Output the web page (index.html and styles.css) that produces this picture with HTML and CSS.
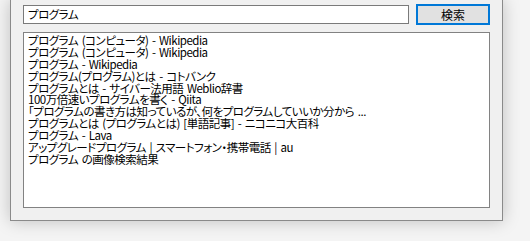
FILE: index.html
```html
<!DOCTYPE html>
<html lang="ja">
<head>
  <meta charset="UTF-8">
  <title>検索</title>
  <link rel="stylesheet" href="styles.css">
</head>
<body>
  <div class="window">
    <div class="search-row">
      <div class="query">プログラム</div>
      <button class="search-btn">検索</button>
    </div>
    <div class="results">
      <div class="item">プログラム (コンピュータ) - Wikipedia</div>
      <div class="item">プログラム (コンピュータ) - Wikipedia</div>
      <div class="item">プログラム - Wikipedia</div>
      <div class="item">プログラム(プログラム)とは - コトバンク</div>
      <div class="item">プログラムとは - サイバー法用語 Weblio辞書</div>
      <div class="item">100万倍速いプログラムを書く - Qiita</div>
      <div class="item">「プログラムの書き方は知っているが、何をプログラムしていいか分から ...</div>
      <div class="item">プログラムとは (プログラムとは) [単語記事] - ニコニコ大百科</div>
      <div class="item">プログラム - Lava</div>
      <div class="item">アップグレードプログラム | スマートフォン・携帯電話 | au</div>
      <div class="item">プログラム の画像検索結果</div>
    </div>
  </div>
</body>
</html>
```

FILE: styles.css
```css
* { margin:0; padding:0; box-sizing:border-box; }
body { height:241px; overflow:hidden; background:#f4f4f4; color:#000; font-family:"Noto Sans CJK JP", sans-serif; font-size:11.5px; }

/* ウィンドウ */
.window { margin-left:10px; width:493px; height:221px; display:flex; flex-direction:column; gap:7px; padding:4px 12px 12px; background:#f0f0f0; border:1px solid #8a8a8a; border-top:none; box-shadow:0 0 16px rgba(0,0,0,0.22); }

/* 検索欄 */
.search-row { display:flex; align-items:center; gap:7px; height:21px; }
.query { width:386px; height:19px; padding:0 4px; line-height:17px; background:#fff; border:1px solid #7a7a7a; letter-spacing:-0.5px; font-feature-settings:"palt"; }
.search-btn { width:74px; height:21px; background:#e1e1e1; border:2px solid #0078d7; font:inherit; font-size:12px; color:#000; line-height:15px; }

/* 結果リスト */
.results { height:176px; padding:2px 4px; background:#fff; border:1px solid #828282; }
.item { height:11.9px; line-height:11.9px; white-space:nowrap; letter-spacing:-0.5px; word-spacing:1.5px; font-feature-settings:"palt"; }
```
